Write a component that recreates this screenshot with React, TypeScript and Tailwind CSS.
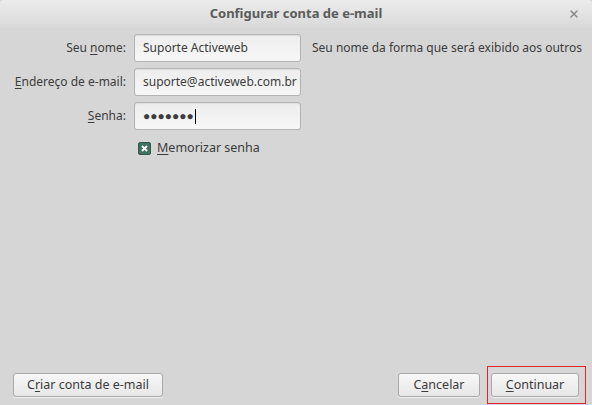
import { X } from "lucide-react";

function Field({ label, value, cursor }: { label: [string, string, string]; value: string; cursor?: boolean }) {
    return (
        <>
            <label className="text-right text-[12px] text-[#3c3c3c] leading-none">
                {label[0]}
                <span className="underline underline-offset-2">{label[1]}</span>
                {label[2]}
            </label>
            <div className="h-[28px] w-[167px] rounded-[3px] border border-[#b3b3b3] bg-gradient-to-b from-[#ededed] to-[#f7f7f7] pl-[8px] pr-[2px] flex items-center text-[12px] text-[#3c3c3c] shadow-[inset_0_1px_1px_rgba(0,0,0,0.06)] overflow-hidden whitespace-nowrap">
                {value}
                {cursor && <span className="ml-[1px] inline-block w-px h-[15px] bg-black" />}
            </div>
        </>
    );
}

function Button({ pre, u, post, className }: { pre: string; u: string; post: string; className?: string }) {
    return (
        <button className={`h-[24px] leading-none rounded-[3px] border border-[#a9a9a9] bg-gradient-to-b from-[#f7f7f7] to-[#e7e7e7] text-[12.5px] text-[#3c3c3c] shadow-[0_1px_0_rgba(255,255,255,0.6)] ${className ?? ""}`}>
            {pre}
            <span className="underline underline-offset-2">{u}</span>
            {post}
        </button>
    );
}

export default function App() {
    return (
        <div className="w-[592px] h-[405px] flex flex-col bg-[#d6d6d6] font-['Noto_Sans',sans-serif] overflow-hidden">
            <div className="h-[28px] shrink-0 relative flex items-center justify-center bg-gradient-to-b from-[#ececec] to-[#d9d9d9] rounded-t-[4px]">
                <span className="text-[13px] font-bold text-[#5c5c5c]">Configurar conta de e-mail</span>
                <X className="absolute right-[12px] top-[8px] text-[#8a8a8a]" size={12} strokeWidth={3} />
            </div>

            <div className="flex-1 flex flex-col">
                <div className="pt-[6px] grid grid-cols-[126px_167px_auto] gap-x-[8px] gap-y-[6px] items-center">
                    <Field label={["Seu ", "n", "ome:"]} value="Suporte Activeweb" />
                    <span className="pl-[3px] text-[12px] text-[#3c3c3c] whitespace-nowrap">Seu nome da forma que será exibido aos outros</span>
                    <Field label={["", "E", "ndereço de e-mail:"]} value="suporte@activeweb.com.br" />
                    <span />
                    <Field label={["", "S", "enha:"]} value="●●●●●●●" cursor />
                    <span />
                    <span />
                    <div className="pt-[3px] flex items-center gap-[6px] pl-[4px]">
                        <span className="w-[13px] h-[13px] rounded-[2px] bg-[#3f7060] border border-[#2f5a4c] flex items-center justify-center">
                            <svg width="7" height="7" viewBox="0 0 7 7">
                                <path d="M1 1L6 6M6 1L1 6" stroke="#ffffff" strokeWidth="1.8" />
                            </svg>
                        </span>
                        <span className="text-[12.5px] text-[#3c3c3c]">
                            <span className="underline underline-offset-2">M</span>emorizar senha
                        </span>
                    </div>
                    <span />
                </div>

                <div className="mt-auto flex items-end justify-between pl-[13px] pr-[6px] pb-[1px]">
                    <Button pre="C" u="r" post="iar conta de e-mail" className="w-[150px] mb-[7px]" />
                    <div className="flex items-end gap-[7px]">
                        <Button pre="C" u="a" post="ncelar" className="w-[82px] mb-[7px]" />
                        <div className="flex border border-[#e0262a] pl-[3px] pr-[6px] py-[6px]">
                            <Button pre="" u="C" post="ontinuar" className="w-[88px]" />
                        </div>
                    </div>
                </div>
            </div>
        </div>
    );
}
